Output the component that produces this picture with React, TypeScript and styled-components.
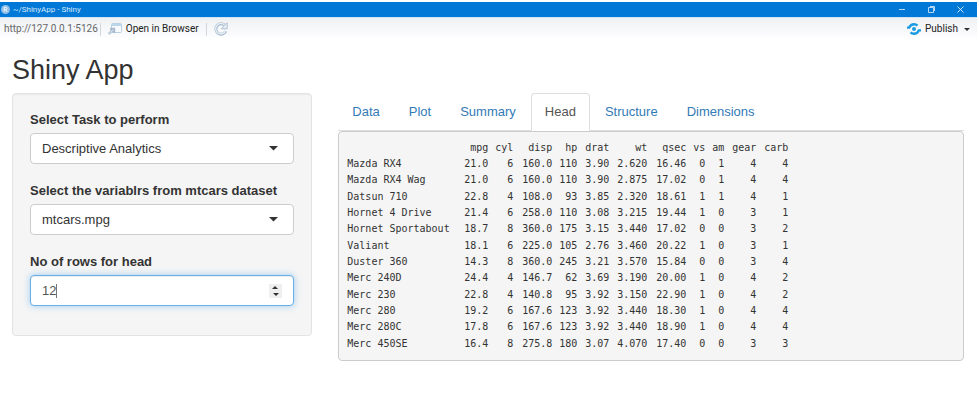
import React, { useState } from 'react';
import styled, { createGlobalStyle } from 'styled-components';

const GlobalStyle = createGlobalStyle`
  *, *::before, *::after { box-sizing: border-box; }
  body {
    margin: 0;
    background: #fff;
    color: #333;
    font-family: "Liberation Sans", Arial, sans-serif;
    font-size: 13px;
    line-height: 17px;
  }
`;

const Chrome = styled.header`
  padding: 2px 2px 0 0;
  font-family: Roboto, "Noto Sans", sans-serif;
`;

const TitleBar = styled.div`
  display: flex;
  align-items: center;
  height: 15px;
  padding: 0 13px 0 1px;
  gap: 3px;
  background: #0078d7;
  color: #d5e9fa;
  font-size: 8px;
  line-height: 15px;
`;

const WindowButtons = styled.div`
  display: flex;
  gap: 22px;
  margin-left: auto;
`;

const WindowButton = styled.button`
  display: flex;
  padding: 0;
  border: 0;
  background: none;
  color: #e3f0fb;
`;

const Toolbar = styled.div`
  display: flex;
  align-items: center;
  height: 21px;
  padding: 2px 7px 0 4px;
  border-top: 1px solid #cfe3f5;
  background: linear-gradient(#eef1f3, #fdfdfe);
  font-size: 10px;
  line-height: 18px;
`;

const Address = styled.span`
  color: #666;
`;

const Divider = styled.span<{ $tight?: boolean }>`
  width: 1px;
  height: 13px;
  margin: 0 7px 0 ${(p) => (p.$tight ? '2px' : '7px')};
  background: #d3d7da;
`;

const ToolButton = styled.button<{ $end?: boolean }>`
  display: flex;
  align-items: center;
  gap: 4px;
  margin-left: ${(p) => (p.$end ? 'auto' : '0')};
  padding: 0;
  border: 0;
  background: none;
  color: #222;
  font: inherit;

  > span {
    margin-right: 2px;
  }
`;

const Page = styled.main`
  padding: 17px 15px 20px 12px;
`;

const Heading = styled.h1`
  margin: 0 0 7px;
  font-size: 27px;
  font-weight: 400;
  line-height: 31px;
`;

const Columns = styled.div`
  display: grid;
  grid-template-columns: 12fr 25fr;
  align-items: start;
  gap: 26px;
`;

const Sidebar = styled.form`
  display: flex;
  flex-direction: column;
  gap: 18px;
  padding: 17px 17px 29px;
  border: 1px solid #e3e3e3;
  border-radius: 4px;
  background: #f5f5f5;
  box-shadow: inset 0 1px 1px rgba(0, 0, 0, 0.05);
`;

const Field = styled.div`
  display: flex;
  flex-direction: column;
  gap: 4px;
`;

const Label = styled.label`
  font-weight: 700;
  line-height: 18px;
`;

const ControlFrame = styled.div`
  display: grid;
  align-items: center;

  > * {
    grid-area: 1 / 1;
  }

  > svg {
    justify-self: end;
    margin-right: 16px;
    pointer-events: none;
  }
`;

const Select = styled.select`
  width: 100%;
  height: 31px;
  padding: 0 30px 0 11px;
  appearance: none;
  border: 1px solid #ccc;
  border-radius: 4px;
  background: #fff;
  color: #333;
  font: inherit;
`;

const NumberInput = styled.input`
  width: 100%;
  height: 31px;
  padding: 0 30px 0 11px;
  appearance: textfield;
  border: 1px solid #ccc;
  border-radius: 4px;
  background: #fff;
  color: #555;
  caret-color: transparent;
  font: inherit;

  &:focus {
    border-color: #66afe9;
    outline: 0;
    box-shadow: inset 0 1px 1px rgba(0, 0, 0, 0.075), 0 0 7px rgba(102, 175, 233, 0.6);
  }

  &::-webkit-inner-spin-button {
    appearance: none;
    margin: 0;
  }
`;

const TextCursor = styled.span`
  justify-self: start;
  width: 1px;
  height: 14px;
  margin-left: 26px;
  background: #777;
  pointer-events: none;
`;

const Spinner = styled.div`
  display: flex;
  flex-direction: column;
  justify-self: end;
  width: 13px;
  margin-right: 12px;
  background: #efefef;
`;

const SpinButton = styled.button<{ $up?: boolean }>`
  display: flex;
  align-items: center;
  justify-content: center;
  height: 7px;
  padding: 0;
  border: 0;
  background: none;
  transform: ${(p) => (p.$up ? 'rotate(180deg)' : 'none')};
`;

const Tabs = styled.nav`
  display: flex;
  gap: 1px;
  border-bottom: 1px solid #ddd;
`;

const Tab = styled.a<{ $active: boolean }>`
  margin-bottom: -1px;
  padding: 10px 13px;
  border: 1px solid ${(p) => (p.$active ? '#ddd' : 'transparent')};
  border-bottom-color: ${(p) => (p.$active ? '#fff' : 'transparent')};
  border-radius: 4px 4px 0 0;
  background: ${(p) => (p.$active ? '#fff' : 'transparent')};
  color: ${(p) => (p.$active ? '#555' : '#337ab7')};
  line-height: 16px;
  text-decoration: none;
`;

const Output = styled.div`
  padding: 8px;
  border: 1px solid #ccc;
  border-radius: 4px;
  background: #f5f5f5;
`;

const Table = styled.table`
  width: 441px;
  height: 212px;
  table-layout: fixed;
  border-collapse: collapse;
  color: #333;
  font-family: "DejaVu Sans Mono", Consolas, monospace;
  font-size: 10px;
  line-height: 16px;
  white-space: nowrap;

  th, td {
    padding: 0;
    font-weight: 400;
    text-align: right;
  }

  tbody th {
    text-align: left;
  }
`;

const Col = styled.col<{ $w: number }>`
  width: ${(p) => p.$w}px;
`;

const columns: [string, number][] = [
  ['', 113], ['mpg', 28], ['cyl', 25], ['disp', 39], ['hp', 25], ['drat', 32],
  ['wt', 38], ['qsec', 39], ['vs', 19], ['am', 19], ['gear', 32], ['carb', 32],
];

const cars = [
  ['Mazda RX4', '21.0', '6', '160.0', '110', '3.90', '2.620', '16.46', '0', '1', '4', '4'],
  ['Mazda RX4 Wag', '21.0', '6', '160.0', '110', '3.90', '2.875', '17.02', '0', '1', '4', '4'],
  ['Datsun 710', '22.8', '4', '108.0', '93', '3.85', '2.320', '18.61', '1', '1', '4', '1'],
  ['Hornet 4 Drive', '21.4', '6', '258.0', '110', '3.08', '3.215', '19.44', '1', '0', '3', '1'],
  ['Hornet Sportabout', '18.7', '8', '360.0', '175', '3.15', '3.440', '17.02', '0', '0', '3', '2'],
  ['Valiant', '18.1', '6', '225.0', '105', '2.76', '3.460', '20.22', '1', '0', '3', '1'],
  ['Duster 360', '14.3', '8', '360.0', '245', '3.21', '3.570', '15.84', '0', '0', '3', '4'],
  ['Merc 240D', '24.4', '4', '146.7', '62', '3.69', '3.190', '20.00', '1', '0', '4', '2'],
  ['Merc 230', '22.8', '4', '140.8', '95', '3.92', '3.150', '22.90', '1', '0', '4', '2'],
  ['Merc 280', '19.2', '6', '167.6', '123', '3.92', '3.440', '18.30', '1', '0', '4', '4'],
  ['Merc 280C', '17.8', '6', '167.6', '123', '3.92', '3.440', '18.90', '1', '0', '4', '4'],
  ['Merc 450SE', '16.4', '8', '275.8', '180', '3.07', '4.070', '17.40', '0', '0', '3', '3'],
];

const tabs = ['Data', 'Plot', 'Summary', 'Head', 'Structure', 'Dimensions'];

const RLogo = () => (
  <svg width="9" height="9" viewBox="0 0 9 9" aria-hidden="true">
    <circle cx="4.5" cy="4.5" r="4.5" fill="#8fbfe8" />
    <path d="M3.2 6.8V2.3h1.5a1.2 1.2 0 0 1 0 2.4H3.2M4.7 4.7l1.3 2.1" fill="none" stroke="#fff" strokeWidth="0.9" />
  </svg>
);

const OpenIcon = () => (
  <svg width="14" height="12" viewBox="0 0 14 12" aria-hidden="true">
    <rect x="3.5" y="0.5" width="10" height="9" rx="1" fill="#f6fafd" stroke="#b9cfe2" />
    <path d="M4 1h9v2H4z" fill="#bcd6ec" />
    <path d="M0.8 11l4.2-4M2 6h4v4" fill="none" stroke="#aabccd" strokeWidth="2.4" />
    <path d="M1.2 10.6l4-3.8" fill="none" stroke="#eef3f8" strokeWidth="0.8" />
  </svg>
);

const RefreshIcon = () => (
  <svg width="14" height="14" viewBox="0 0 14 14" aria-hidden="true">
    <path d="M11.8 9.2A5.2 5.2 0 1 1 10.5 3" fill="none" stroke="#a9bccf" strokeWidth="3" />
    <path d="M13.2 0.8v6H7.4z" fill="#e9f0f6" stroke="#a9bccf" strokeWidth="0.9" />
    <path d="M11.4 9.1A5.2 5.2 0 1 1 10.5 3" fill="none" stroke="#e9f0f6" strokeWidth="1.3" />
  </svg>
);

const PublishIcon = () => (
  <svg width="14" height="12" viewBox="0 0 14 12" aria-hidden="true">
    <circle cx="7" cy="6" r="2" fill="#1c9be0" />
    <path d="M0 4.6h2.2C3.2 2.4 5 1.3 7 1.3c1.4 0 2.6.5 3.5 1.4" fill="none" stroke="#1c9be0" strokeWidth="2.4" />
    <path d="M14 7.4h-2.2C10.8 9.6 9 10.7 7 10.7c-1.4 0-2.6-.5-3.5-1.4" fill="none" stroke="#1c9be0" strokeWidth="2.4" />
  </svg>
);

const Caret = ({ size }: { size: number }) => (
  <svg width={size} height={size / 2} viewBox="0 0 10 5" aria-hidden="true">
    <path d="M0 0h10L5 5z" fill="#333" />
  </svg>
);

const SelectField = ({ id, label, options }: { id: string; label: string; options: string[] }) => (
  <Field>
    <Label htmlFor={id}>{label}</Label>
    <ControlFrame>
      <Select id={id}>
        {options.map((o) => (
          <option key={o}>{o}</option>
        ))}
      </Select>
      <Caret size={9} />
    </ControlFrame>
  </Field>
);

export default function App() {
  const [active, setActive] = useState('Head');
  const [rows, setRows] = useState('12');
  const step = (by: number) => setRows((r) => String(Number(r) + by));

  return (
    <>
      <GlobalStyle />
      <Chrome>
        <TitleBar>
          <RLogo />
          <span>~/ShinyApp - Shiny</span>
          <WindowButtons>
            <WindowButton aria-label="Minimize">
              <svg width="7" height="7" viewBox="0 0 7 7"><path d="M0 3.5h6" stroke="currentColor" strokeWidth="0.8" /></svg>
            </WindowButton>
            <WindowButton aria-label="Restore">
              <svg width="7" height="7" viewBox="0 0 7 7"><path d="M.5 1.5h5v5h-5zM2 .5h4.5V5" fill="none" stroke="currentColor" strokeWidth="0.8" /></svg>
            </WindowButton>
            <WindowButton aria-label="Close">
              <svg width="7" height="7" viewBox="0 0 7 7"><path d="M.5.5l6 6M6.5.5l-6 6" stroke="currentColor" strokeWidth="0.9" /></svg>
            </WindowButton>
          </WindowButtons>
        </TitleBar>
        <Toolbar>
          <Address>http://127.0.0.1:5126</Address>
          <Divider $tight />
          <ToolButton><OpenIcon />Open in Browser</ToolButton>
          <Divider />
          <ToolButton aria-label="Reload"><RefreshIcon /></ToolButton>
          <ToolButton $end><PublishIcon /><span>Publish</span><Caret size={6} /></ToolButton>
        </Toolbar>
      </Chrome>
      <Page>
        <Heading>Shiny App</Heading>
        <Columns>
          <Sidebar>
            <SelectField id="task" label="Select Task to perform" options={['Descriptive Analytics']} />
            <SelectField id="variable" label="Select the variablrs from mtcars dataset" options={['mtcars.mpg']} />
            <Field>
              <Label htmlFor="rows">No of rows for head</Label>
              <ControlFrame>
                <NumberInput id="rows" type="number" autoFocus value={rows} onChange={(e) => setRows(e.target.value)} />
                <TextCursor />
                <Spinner>
                  <SpinButton type="button" $up aria-label="Increase" onClick={() => step(1)}><Caret size={6} /></SpinButton>
                  <SpinButton type="button" aria-label="Decrease" onClick={() => step(-1)}><Caret size={6} /></SpinButton>
                </Spinner>
              </ControlFrame>
            </Field>
          </Sidebar>
          <section>
            <Tabs>
              {tabs.map((t) => (
                <Tab key={t} href={`#${t}`} $active={t === active} onClick={() => setActive(t)}>{t}</Tab>
              ))}
            </Tabs>
            <Output>
              <Table>
                <colgroup>
                  {columns.map(([name, w]) => <Col key={name} $w={w} />)}
                </colgroup>
                <thead>
                  <tr>
                    {columns.map(([name]) => (name ? <th key={name} scope="col">{name}</th> : <td key="name" />))}
                  </tr>
                </thead>
                <tbody>
                  {cars.map(([name, ...values]) => (
                    <tr key={name}>
                      <th scope="row">{name}</th>
                      {values.map((v, i) => <td key={i}>{v}</td>)}
                    </tr>
                  ))}
                </tbody>
              </Table>
            </Output>
          </section>
        </Columns>
      </Page>
    </>
  );
}
